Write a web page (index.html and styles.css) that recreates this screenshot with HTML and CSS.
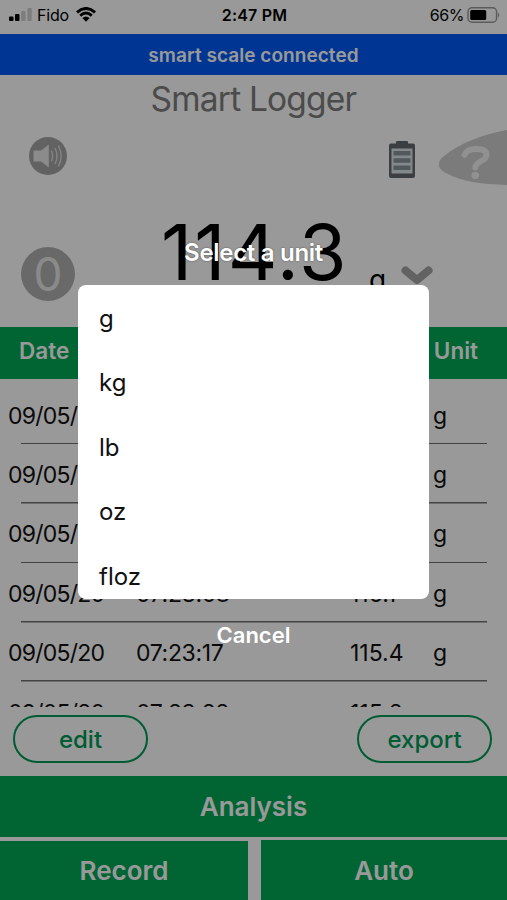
FILE: index.html
```
<!DOCTYPE html>
<html lang="en">
<head>
  <meta charset="UTF-8" />
  <meta name="viewport" content="width=device-width, initial-scale=1.0"/>
  <title>Smart Logger</title>
  <link rel="stylesheet" href="styles.css">
</head>
<body>
  <div class="app">
    <header class="status-bar">
      <div class="carrier">
        <svg class="signal" width="24" height="14" viewBox="0 0 24 14">
          <rect x="0" y="8.5" width="4.5" height="4.5" rx="1"/>
          <rect x="6" y="6" width="4.5" height="7" rx="1"/>
          <rect class="weak" x="12.2" y="3" width="4.3" height="10" rx="1"/>
          <rect class="weak" x="18.4" y="0" width="4.3" height="13" rx="1"/>
        </svg>
        <span class="carrier-name">Fido</span>
        <svg class="wifi" width="20" height="15" viewBox="0 0 20 15">
          <path d="M1 5.3Q10-2.4 19 5.3M4.2 8.6Q10 3.6 15.8 8.6" fill="none" stroke="#000" stroke-width="2.9"/>
          <path d="M6.4 11.1Q10 8 13.6 11.1L10 14.8Z"/>
        </svg>
      </div>
      <span class="clock">2:47 PM</span>
      <div class="power">
        <span class="percent">66%</span>
        <svg width="33" height="16" viewBox="0 0 33 16">
          <rect x="1" y=".8" width="28.6" height="14.4" rx="4" fill="none" stroke="#9a9a9a" stroke-width="1.5"/>
          <rect x="3.2" y="3" width="16" height="10" rx="1.5"/>
          <path d="M31 5.5Q33.5 8 31 10.5Z" fill="#9a9a9a"/>
        </svg>
      </div>
    </header>

    <div class="banner">smart scale connected</div>
    <h1 class="title">Smart Logger</h1>

    <div class="toolbar">
      <svg class="sound" width="38" height="38" viewBox="0 0 38 38">
        <circle cx="19" cy="19" r="19" fill="#a3a3a3"/>
        <path d="M4.5 13.5H12L19.8 7.5V30.5L12 24.5H4.5Z" fill="#e8e8e8"/>
        <path d="M22.3 13.5Q25 19 22.3 24.5M26 11Q30 19 26 27M29.3 8.5Q35 19 29.3 29.5" fill="none" stroke="#dadada" stroke-width="1.5"/>
      </svg>
      <svg class="battery" width="26" height="38" viewBox="0 0 26 38">
        <path d="M7 1Q7 0 8 0H18Q19 0 19 1V2.5H24Q26 2.5 26 4.5V35Q26 37 24 37H2Q0 37 0 35V4.5Q0 2.5 2 2.5H7Z" fill="#65696d"/>
        <rect x="2.5" y="7.5" width="21" height="25" fill="#dbe4e8"/>
        <path d="M4.5 10h17v4.5h-17zM4.5 17.2h17v4.5h-17zM4.5 24.5h17v4.5h-17z" fill="#89949b"/>
      </svg>
      <svg class="help" width="69" height="57" viewBox="0 0 69 57">
        <path d="M69 1C46 5 22 14 6 27C-2 33 0 40 8 44C24 53 44 55 69 56Z" fill="#cdcdcd"/>
        <path d="M26.5 26C28 22 32 20 38 20C45 20 48.5 22 48.5 26C48.5 32.5 37.5 32 37.3 38.5" fill="none" stroke="#f2f2f2" stroke-width="5.8" stroke-linecap="round"/>
        <circle cx="37.3" cy="46.5" r="3.8" fill="#f2f2f2"/>
      </svg>
    </div>

    <div class="reading">
      <div class="zero">0</div>
      <div class="value">114.3</div>
      <div class="unit">g</div>
      <svg class="chevron" width="32" height="20" viewBox="0 0 32 20">
        <path d="M4.5 4.5L16 14L27.5 4.5" fill="none" stroke="#a3a3a3" stroke-width="8" stroke-linecap="round" stroke-linejoin="round"/>
      </svg>
    </div>

    <div class="log-head">
      <span>Date</span>
      <span class="unit-col">Unit</span>
    </div>
    <div class="log">
      <div class="row"><span class="date">09/05/20</span><span></span><span></span><span>g</span></div>
      <div class="row"><span class="date">09/05/20</span><span></span><span></span><span>g</span></div>
      <div class="row"><span class="date">09/05/20</span><span></span><span></span><span>g</span></div>
      <div class="row"><span class="date">09/05/20</span><span class="time">07:23:08</span><span>116.1</span><span>g</span></div>
      <div class="row"><span class="date">09/05/20</span><span class="time">07:23:17</span><span>115.4</span><span>g</span></div>
      <div class="row"><span class="date">09/05/20</span><span class="time">07:23:28</span><span>115.2</span><span></span></div>
    </div>

    <div class="actions">
      <button class="pill">edit</button>
      <button class="pill">export</button>
    </div>
    <button class="analysis">Analysis</button>
    <div class="modes">
      <button class="record">Record</button>
      <button class="auto">Auto</button>
    </div>
  </div>

  <div class="overlay">
    <div class="dialog-title">Select a unit</div>
    <ul class="unit-list">
      <li>g</li>
      <li>kg</li>
      <li>lb</li>
      <li>oz</li>
      <li>floz</li>
    </ul>
    <div class="cancel">Cancel</div>
  </div>
</body>
</html>
```
FILE: styles.css
```
* {
  box-sizing: border-box;
}
body {
  margin: 0;
  font-family: Inter, "Liberation Sans", sans-serif;
  color: #000;
}
button {
  font-family: inherit;
  border: none;
  padding: 0;
}
.app {
  width: 507px;
  height: 900px;
  overflow: hidden;
  background-color: #fff;
  display: flex;
  flex-direction: column;
}
.app > * {
  flex-shrink: 0;
}
.status-bar {
  height: 34px;
  padding: 0 7px 5px 9px;
  display: grid;
  grid-template-columns: 1fr auto 1fr;
  align-items: center;
  font-size: 16px;
}
.carrier {
  display: flex;
  align-items: center;
}
.weak {
  fill: #d0d0d0;
}
.carrier-name {
  margin: 0 7px 0 4px;
  letter-spacing: -0.2px;
}
.clock {
  font-weight: 600;
  letter-spacing: 0.2px;
}
.power {
  display: flex;
  align-items: center;
  justify-content: flex-end;
  gap: 3px;
}
.percent {
  letter-spacing: -0.4px;
}
.banner {
  height: 41px;
  background-color: #0059f5;
  color: #fff;
  font-size: 19px;
  font-weight: 600;
  line-height: 43px;
  text-align: center;
  letter-spacing: 0.05px;
}
.title {
  height: 48px;
  margin: 0;
  color: #7d7d7d;
  font-size: 33.5px;
  font-weight: 400;
  line-height: 49px;
  text-align: center;
  letter-spacing: -0.8px;
}
.toolbar {
  height: 70px;
  display: flex;
  align-items: flex-start;
  padding: 6px 0 0 29px;
}
.sound {
  margin-top: 8px;
}
.battery {
  margin: 12px 23px 0 auto;
}
.reading {
  height: 134px;
  padding-left: 21px;
  display: flex;
  align-items: flex-start;
}
.zero {
  width: 54px;
  height: 54px;
  margin-top: 54px;
  border-radius: 50%;
  background-color: #b0b0b0;
  color: #e6e6e6;
  font-size: 46px;
  line-height: 54px;
  text-align: center;
}
.value {
  width: 190px;
  margin: 20px 0 0 86px;
  font-size: 77px;
  line-height: 78px;
  letter-spacing: 2px;
}
.unit {
  width: 34px;
  margin-top: 70px;
  padding-left: 18px;
  font-size: 28px;
}
.chevron {
  margin: 73px 0 0 16px;
}
.log-head {
  height: 52px;
  padding: 0 29px 6px 19px;
  background-color: #00a856;
  color: #fff;
  display: flex;
  align-items: center;
  justify-content: space-between;
  font-size: 22.5px;
  font-weight: 600;
}
.log {
  height: 328px;
  padding-top: 6px;
  overflow: hidden;
}
.row {
  height: 59.4px;
  padding: 2px 0 0 8px;
  display: grid;
  grid-template-columns: 128px 214px 83px 1fr;
  align-items: center;
  font-size: 23px;
  color: #111;
  background: linear-gradient(#707070, #707070) 21px 100% / 466px 1.5px no-repeat;
}
.date {
  letter-spacing: -0.75px;
}
.time {
  letter-spacing: -0.35px;
}
.actions {
  height: 69px;
  padding: 8px 15px 0 13px;
  display: flex;
  justify-content: space-between;
}
.pill {
  width: 135px;
  height: 48px;
  border: 2.5px solid #009a58;
  border-radius: 24px;
  background-color: #fff;
  color: #009a58;
  font-size: 24px;
  font-weight: 500;
}
.analysis,
.record,
.auto {
  background-color: #00a856;
  color: #fff;
  font-size: 26px;
  font-weight: 600;
}
.analysis {
  height: 61px;
}
.modes {
  height: 63px;
  display: flex;
  justify-content: space-between;
}
.record {
  width: 248px;
  margin-top: 4px;
}
.auto {
  width: 246px;
  margin-top: 3px;
}
/* unit picker on top of the dimmed page */
.overlay {
  position: absolute;
  top: 0;
  left: 0;
  width: 507px;
  height: 900px;
  padding-top: 237px;
  background-color: rgba(0, 0, 0, 0.4);
  display: flex;
  flex-direction: column;
  align-items: center;
  color: #fff;
  font-size: 22px;
  font-weight: 600;
}
.dialog-title {
  height: 47.5px;
  line-height: 31px;
  font-size: 24px;
  letter-spacing: -0.3px;
  text-shadow: 0 0 2px rgba(0, 0, 0, 0.5);
}
.unit-list {
  width: 351px;
  height: 314.5px;
  margin: 0;
  padding: 2px 20px 0 21px;
  overflow: hidden;
  list-style: none;
  border-radius: 8px;
  background-color: #fff;
  color: #111;
  font-size: 24px;
  font-weight: 400;
}
.unit-list li {
  height: 64.5px;
  line-height: 64.5px;
}
.cancel {
  margin-top: 21px;
  line-height: 30px;
}
```
